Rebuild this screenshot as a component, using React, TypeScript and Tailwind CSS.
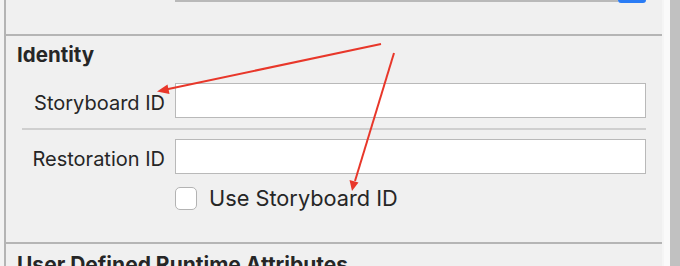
const font = { fontFamily: "Inter, 'Liberation Sans', sans-serif" };

function Field({ label }: { label: string }) {
  return (
    <div className="flex items-center">
      <span className="w-[159px] pt-[5px] text-right text-[20px] leading-[24px] text-[#262626]">{label}</span>
      <div className="ml-[10px] h-[35px] w-[471px] border border-[#b9b9b9] bg-white" />
    </div>
  );
}

function Arrows() {
  return (
    <svg className="pointer-events-none absolute inset-0" width={680} height={266}>
      <line x1={381} y1={44} x2={166} y2={89.5} stroke="#e8372a" strokeWidth={2} />
      <polygon points="157,91.5 167.5,84.5 169.5,94" fill="#e8372a" />
      <line x1={394} y1={53} x2={355} y2={181} stroke="#e8372a" strokeWidth={2} />
      <polygon points="352,191 349.5,180 358.5,182.5" fill="#e8372a" />
    </svg>
  );
}

export default function App() {
  return (
    <div className="relative flex h-[266px] w-[680px] overflow-hidden bg-[#f3f3f3]" style={font}>
      <div className="w-[4px]" />
      <div className="w-[2px] bg-[#b4b4b4]" />
      <div className="flex w-[656px] flex-col overflow-hidden bg-[#f0f0f0]">
        <div className="h-[34px] shrink-0">
          <div className="ml-[169px] flex">
            <div className="h-[2px] w-[443px] bg-[#b9b9b9]" />
            <div className="h-[3px] w-[28px] rounded-b-[3px] bg-[#2a7cf5]" />
          </div>
        </div>
        <div className="h-[2px] shrink-0 bg-[#b5b5b5]" />
        <div className="h-[206px] shrink-0">
          <div className="pl-[11px] pt-[7px] text-[20.5px] font-bold leading-[24px] text-[#262626]">Identity</div>
          <div className="mt-[16px]">
            <Field label="Storyboard ID" />
          </div>
          <div className="ml-[16px] mt-[10px] h-[2px] w-[624px] bg-[#cfcfcf]" />
          <div className="mt-[9px]">
            <Field label="Restoration ID" />
          </div>
          <div className="ml-[169px] mt-[12px] flex items-center">
            <div className="h-[23px] w-[22px] rounded-[5px] border border-[#b3b3b3] bg-white" />
            <span className="ml-[12px] text-[21.75px] leading-[24px] text-[#262626]">Use Storyboard ID</span>
          </div>
        </div>
        <div className="h-[2px] shrink-0 bg-[#b5b5b5]" />
        <div className="shrink-0 pl-[11px] pt-[9px] text-[21px] font-bold leading-[24px] text-[#262626]">
          User Defined Runtime Attributes
        </div>
      </div>
      <div className="w-[2px] bg-[#f5f5f5]" />
      <div className="w-[6px] bg-[#fafafa]" />
      <div className="w-[10px] bg-[#c1c1c1]" />
      <Arrows />
    </div>
  );
}
